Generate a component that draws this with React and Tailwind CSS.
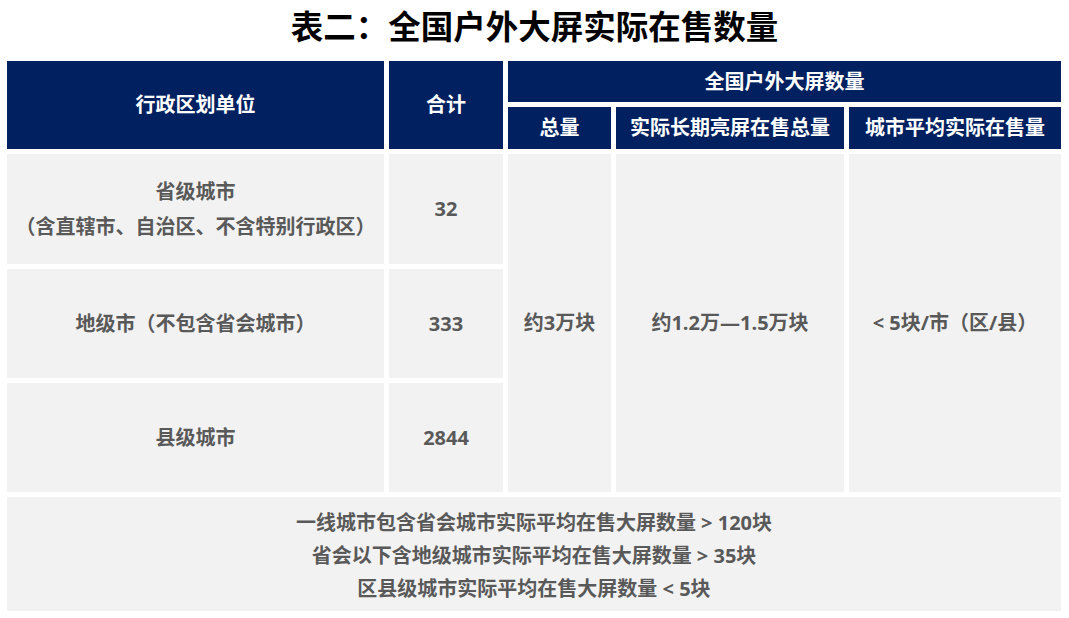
import React from "react";

const head = "bg-[#002060] text-white flex items-center justify-center text-[20px] font-bold";
const cell = "bg-[#f2f2f2] text-[#595959] flex flex-col items-center justify-center text-[20px] font-bold text-center";

const rows = [
    { name: ["省级城市", "（含直辖市、自治区、不含特别行政区）"], total: "32" },
    { name: ["地级市（不包含省会城市）"], total: "333" },
    { name: ["县级城市"], total: "2844" }
];

export default function App() {
    return (
        <div className="w-[1069px] h-[618px] bg-white font-['Open_Sans','Noto_Sans_CJK_SC',sans-serif]">
            <div className="h-[61px] flex items-center justify-center pb-[6px] text-[32.5px] font-bold text-black leading-none">
                表二：全国户外大屏实际在售数量
            </div>

            <div className="ml-[7px] grid grid-cols-[377px_114px_103px_228px_212px] grid-rows-[41px_42px_110px_109px_109px_114px] gap-[5px]">
                <div className={`${head} row-span-2`}>行政区划单位</div>
                <div className={`${head} row-span-2`}>合计</div>
                <div className={`${head} col-span-3`}>全国户外大屏数量</div>
                <div className={head}>总量</div>
                <div className={head}>实际长期亮屏在售总量</div>
                <div className={head}>城市平均实际在售量</div>

                {rows.map((r, i) => (
                    <React.Fragment key={i}>
                        <div className={`${cell} leading-[35px] col-start-1`} style={{ gridRowStart: i + 3 }}>
                            {r.name.map((line) => (
                                <span key={line}>{line}</span>
                            ))}
                        </div>
                        <div className={`${cell} col-start-2`} style={{ gridRowStart: i + 3 }}>
                            {r.total}
                        </div>
                    </React.Fragment>
                ))}

                <div className={`${cell} col-start-3 row-start-3 row-span-3`}>约3万块</div>
                <div className={`${cell} col-start-4 row-start-3 row-span-3`}>约1.2万—1.5万块</div>
                <div className={`${cell} col-start-5 row-start-3 row-span-3`}>&lt; 5块/市（区/县）</div>

                <div className={`${cell} col-span-5 leading-[33px] pt-[2px]`}>
                    <span>一线城市包含省会城市实际平均在售大屏数量 &gt; 120块</span>
                    <span>省会以下含地级城市实际平均在售大屏数量 &gt; 35块</span>
                    <span>区县级城市实际平均在售大屏数量 &lt; 5块</span>
                </div>
            </div>
        </div>
    );
}
